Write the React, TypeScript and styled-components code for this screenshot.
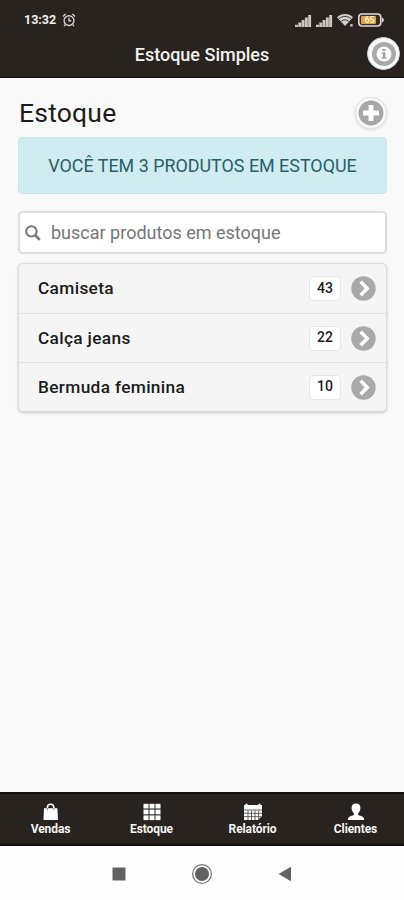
import React from "react";
import styled, { createGlobalStyle } from "styled-components";

const GlobalStyle = createGlobalStyle`
  * { box-sizing: border-box; }
  html, body { margin: 0; padding: 0; background: #fff; }
  body { font-family: Roboto, "Liberation Sans", sans-serif; color: #1f1f1f; }
  h1, h2, ul, p { margin: 0; padding: 0; font-weight: inherit; }
`;

const Screen = styled.div`
  width: 404px;
  height: 900px;
  display: flex;
  flex-direction: column;
  overflow: hidden;
  background: #f9f9f9;
`;

const StatusBar = styled.div`
  height: 37px;
  flex: none;
  padding: 3px 20px 0 24px;
  display: flex;
  align-items: center;
  background: #28231f;
  color: #f0eeeb;
`;

const Clock = styled.span`
  width: 38px;
  font-size: 12.5px;
  font-weight: 700;
  line-height: 20px;
`;

const StatusIcons = styled.div`
  margin-left: auto;
  display: flex;
  align-items: center;
  gap: 4px;
  svg { display: block; }
`;

const Header = styled.header`
  height: 41px;
  flex: none;
  padding: 0 4px 7px;
  display: grid;
  grid-template-columns: 33px 1fr 33px;
  align-items: center;
  background: #28231f;
  border-bottom: 1px solid #11100e;
`;

const HeaderTitle = styled.h1`
  padding-top: 2px;
  text-align: center;
  white-space: nowrap;
  color: #f4f2ef;
  font-size: 18px;
  font-weight: 500;
  line-height: 24px;
`;

const RoundButton = styled.button<{ $size: number; $tone: "dark" | "light" }>`
  width: ${(p) => p.$size}px;
  height: ${(p) => p.$size}px;
  padding: 0;
  display: flex;
  align-items: center;
  justify-content: center;
  flex: none;
  border-radius: 50%;
  background: #fbfbfb;
  border: 1px solid ${(p) => (p.$tone === "dark" ? "#d5d3d1" : "#e4e4e4")};
  box-shadow: ${(p) => (p.$tone === "dark" ? "none" : "0 1px 3px rgba(0, 0, 0, 0.14)")};
`;

const Content = styled.main`
  flex: 1;
  padding: 18px 17px 0 18px;
`;

const TitleRow = styled.div`
  height: 34px;
  display: flex;
  align-items: center;
  justify-content: space-between;
`;

const PageTitle = styled.h2`
  padding-left: 1px;
  font-size: 26.5px;
  line-height: 34px;
  letter-spacing: 0.2px;
  color: #1c1c1c;
`;

const Alert = styled.div`
  height: 57px;
  margin-top: 7px;
  display: flex;
  align-items: center;
  justify-content: center;
  border: 1px solid #c1e7eb;
  border-radius: 4px;
  background: #d0ecf0;
  color: #286067;
  font-size: 17.9px;
  white-space: nowrap;
`;

const SearchBox = styled.label`
  height: 43px;
  margin-top: 17px;
  padding: 0 5px;
  display: flex;
  align-items: center;
  border: 2px solid #dfdfdf;
  border-radius: 5px;
  background: #fff;
  box-shadow: 0 0 1px #dedede;
`;

const SearchInput = styled.input`
  flex: 1;
  min-width: 0;
  margin-left: 10px;
  padding: 0;
  border: 0;
  outline: 0;
  background: transparent;
  font-family: inherit;
  font-size: 18px;
  &::placeholder { color: #777; opacity: 1; }
`;

const StockList = styled.ul`
  margin-top: 9px;
  list-style: none;
  border: 1px solid #dcdcdc;
  border-radius: 5px;
  background: #f5f5f5;
  box-shadow: 0 1px 3px rgba(0, 0, 0, 0.18);
`;

const StockRow = styled.li`
  height: 49px;
  padding: 0 10px 0 19px;
  display: flex;
  align-items: center;
  & + & { border-top: 1px solid #e0e0e0; }
`;

const ProductName = styled.span`
  flex: 1;
  padding-bottom: 1px;
  font-size: 17.3px;
  font-weight: 500;
  letter-spacing: 0.33px;
  white-space: nowrap;
  color: #1b1b1b;
`;

const Count = styled.span`
  width: 32px;
  height: 25px;
  margin-right: 10px;
  padding-bottom: 2px;
  display: flex;
  align-items: center;
  justify-content: center;
  border: 1px solid #e7e7e7;
  border-radius: 4px;
  background: #fff;
  font-size: 14px;
  font-weight: 500;
  color: #1d1d1d;
`;

const TabBar = styled.nav`
  height: 54px;
  flex: none;
  padding-top: 9px;
  display: grid;
  grid-template-columns: 101px 101px 101px 1fr;
  background: #28231f;
  border-top: 2px solid #14110f;
  border-bottom: 2px solid #110f0d;
`;

const Tab = styled.a`
  display: flex;
  flex-direction: column;
  align-items: center;
  color: #f7f5f3;
  font-size: 12px;
  font-weight: 700;
  line-height: 17px;
  letter-spacing: -0.1px;
  svg { display: block; }
  &:last-child { padding-left: 4px; }
`;

const SystemNav = styled.div`
  height: 54px;
  flex: none;
  padding: 1px 112px 0 112px;
  display: flex;
  align-items: center;
  justify-content: space-between;
  background: #fefefe;
`;

const Alarm = () => (
  <svg width="14" height="14" viewBox="0 0 14 14" fill="none" stroke="#d5d2ce" strokeWidth="1.4">
    <circle cx="7" cy="7.6" r="4.9" />
    <path d="M1 3.4 3.6 1M13 3.4 10.4 1M3.2 11.6 2 13.1M10.8 11.6 12 13.1M7 4.8v3h2.2" />
  </svg>
);

const Signal = () => (
  <svg width="17" height="13" viewBox="0 0 17 13" fill="#c9c6c2">
    <path d="M0 10.8h2.9V13H0zM3.3 8.6h2.9V13H3.3zM6.6 6h2.9v7H6.6zM9.9 3.6h2.9V13H9.9zM13.2 1h2.9v12h-2.9z" />
  </svg>
);

const Wifi = () => (
  <svg width="17" height="14" viewBox="0 0 17 14">
    <path d="M0 4.2C4.7-.1 11.3-.1 16 4.2L8 13z" fill="#d3d1ce" />
    <path d="M2 5.6c3.8-3 8.2-3 12 0M4.5 8.2c2.2-1.8 4.8-1.8 7 0" fill="none" stroke="#3b3733" strokeWidth="1" />
    <path d="M12 10h5v4h-5z" fill="#28231f" />
    <path d="M13.2 11.2h2.5v2.3h-2.5z" fill="#d3d1ce" />
  </svg>
);

const Battery = () => (
  <svg width="26" height="14" viewBox="0 0 26 14">
    <rect x=".8" y="1" width="22" height="12" rx="3.2" fill="#3b2c20" stroke="#dedbd7" strokeWidth="1.6" />
    <path d="M24 4.5c2.4.8 2.4 4.2 0 5z" fill="#dedbd7" />
    <rect x="3" y="3" width="15" height="8" rx="1" fill="#dda044" />
    <text x="11.6" y="10.2" textAnchor="middle" fontFamily="Roboto, sans-serif" fontSize="9" fontWeight="700" fill="#fff0d4">65</text>
  </svg>
);

const InfoIcon = () => (
  <svg width="26" height="26" viewBox="0 0 26 26">
    <circle cx="13" cy="13" r="12" fill="#a9a9a9" />
    <circle cx="13" cy="13" r="7.5" fill="#fbfbfb" />
    <path d="M11.4 8h3v2h-3zM10.8 11.2h3.6v5h1.2v1.5h-4.9v-1.5h1.2v-3.5h-1.1z" fill="#a2a2a2" />
  </svg>
);

const PlusIcon = () => (
  <svg width="26" height="26" viewBox="0 0 26 26">
    <circle cx="13" cy="13" r="12.5" fill="#a7a7a7" />
    <path d="M10.5 5h5v5.5H21v5h-5.5V21h-5v-5.5H5v-5h5.5z" fill="#fff" />
  </svg>
);

const SearchIcon = () => (
  <svg width="16" height="16" viewBox="0 0 16 16" fill="none" stroke="#777">
    <circle cx="6.4" cy="6.4" r="5.2" strokeWidth="2" />
    <path d="m10 10 4.8 4.8" strokeWidth="2.5" />
  </svg>
);

const Chevron = () => (
  <svg width="25" height="25" viewBox="0 0 25 25">
    <circle cx="12.5" cy="12.5" r="12.2" fill="#a9a9a9" />
    <path d="m9.6 5.8 6.6 6.7-6.6 6.7" fill="none" stroke="#fff" strokeWidth="3.6" />
  </svg>
);

const BagIcon = () => (
  <svg width="17" height="18" viewBox="0 0 17 18">
    <path d="M5.4 6V4.4a3.2 3.2 0 0 1 6.4 0V6" fill="none" stroke="#fff" strokeWidth="1.6" />
    <path d="M2 5.2h13.4L16 17H1.5z" fill="#fff" />
    <path d="M5.4 5v2.2M11.8 5v2.2" stroke="#77716b" strokeWidth=".9" />
  </svg>
);

const GridIcon = () => (
  <svg width="18" height="18" viewBox="0 0 18 18" fill="#fff">
    {[0.8, 6.6, 12.4].map((y) =>
      [0.5, 6.5, 12.5].map((x) => <rect key={`${x}-${y}`} x={x} y={y} width="5" height="4.7" />)
    )}
  </svg>
);

const CalendarIcon = () => (
  <svg width="20" height="18" viewBox="0 0 20 18">
    <path d="M1 2h1.5V.8h2V2h11V.8h2V2H19v11l-4 4H1z" fill="#fff" />
    <path d="M1 7h18M1 10.3h18M1 13.6h17M5 7.5V17M8.5 7.5V17M12 7.5V17M15.5 7.5V16" stroke="#59534e" strokeWidth=".9" />
  </svg>
);

const UserIcon = () => (
  <svg width="18" height="18" viewBox="0 0 18 18" fill="#fff">
    <path d="M9 .5c3 0 4.7 1.8 4.4 4.7-.1 2-1 3.8-2.2 4.9v2c2.4 1.1 6 1.2 6 4.9H.8c0-3.7 3.6-3.8 6-4.9v-2C5.6 9 4.7 7.2 4.6 5.2 4.3 2.3 6 .5 9 .5z" />
  </svg>
);

const products = [
  { name: "Camiseta", count: 43 },
  { name: "Calça jeans", count: 22 },
  { name: "Bermuda feminina", count: 10 },
];

const tabs = [
  { label: "Vendas", Icon: BagIcon },
  { label: "Estoque", Icon: GridIcon },
  { label: "Relatório", Icon: CalendarIcon },
  { label: "Clientes", Icon: UserIcon },
];

export default function App() {
  return (
    <Screen>
      <GlobalStyle />
      <StatusBar>
        <Clock>13:32</Clock>
        <Alarm />
        <StatusIcons>
          <Signal />
          <Signal />
          <Wifi />
          <Battery />
        </StatusIcons>
      </StatusBar>
      <Header>
        <span />
        <HeaderTitle>Estoque Simples</HeaderTitle>
        <RoundButton $size={33} $tone="dark" aria-label="Informações">
          <InfoIcon />
        </RoundButton>
      </Header>
      <Content>
        <TitleRow>
          <PageTitle>Estoque</PageTitle>
          <RoundButton $size={32} $tone="light" aria-label="Adicionar">
            <PlusIcon />
          </RoundButton>
        </TitleRow>
        <Alert>VOCÊ TEM 3 PRODUTOS EM ESTOQUE</Alert>
        <SearchBox>
          <SearchIcon />
          <SearchInput placeholder="buscar produtos em estoque" />
        </SearchBox>
        <StockList>
          {products.map((p) => (
            <StockRow key={p.name}>
              <ProductName>{p.name}</ProductName>
              <Count>{p.count}</Count>
              <Chevron />
            </StockRow>
          ))}
        </StockList>
      </Content>
      <TabBar>
        {tabs.map(({ label, Icon }) => (
          <Tab key={label}>
            <Icon />
            {label}
          </Tab>
        ))}
      </TabBar>
      <SystemNav>
        <svg width="14" height="14" viewBox="0 0 14 14">
          <rect x=".5" y=".5" width="13" height="13" fill="#626262" />
        </svg>
        <svg width="22" height="22" viewBox="0 0 22 22">
          <circle cx="11" cy="11" r="9.4" fill="none" stroke="#777" strokeWidth="1.3" />
          <circle cx="11" cy="11" r="7" fill="#626262" />
        </svg>
        <svg width="14" height="16" viewBox="0 0 14 16">
          <path d="M13 .8v14.4L.5 8z" fill="#626262" />
        </svg>
      </SystemNav>
    </Screen>
  );
}
